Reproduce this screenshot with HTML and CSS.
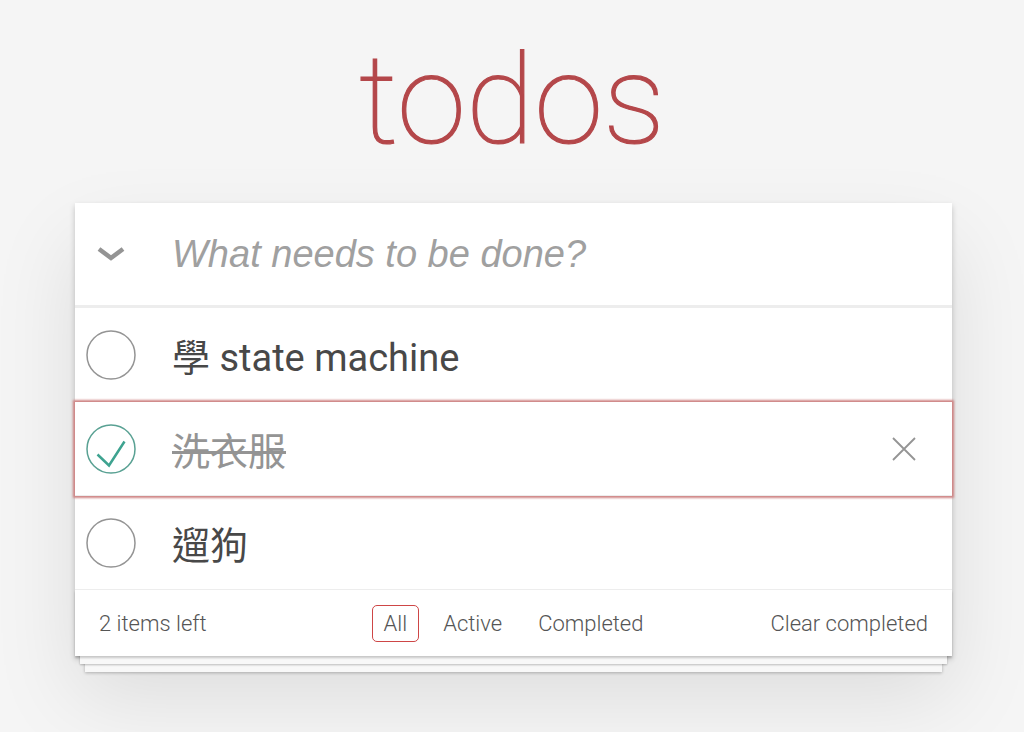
FILE: index.html
```html
<!DOCTYPE html>
<html lang="zh-Hant">
<head>
    <meta charset="UTF-8">
    <meta name="viewport" content="width=device-width, initial-scale=1.0">
    <title>todos</title>
    <link rel="stylesheet" href="styles.css">
</head>
<body>

<!-- Título -->
<h1 class="title">todos</h1>

<!-- Tarjeta principal -->
<section class="todoapp">
    <header class="header">
        <span class="toggle-all">
            <svg width="30" height="18" viewBox="0 0 30 18"><polyline points="3,4 15,13 27,4" fill="none" stroke="#949494" stroke-width="4.5"/></svg>
        </span>
        <input class="new-todo" type="text" placeholder="What needs to be done?">
    </header>

    <ul class="todo-list">
        <li class="todo">
            <span class="toggle">
                <svg width="52" height="52" viewBox="-2 -2 104 104"><circle cx="50" cy="50" r="48" fill="none" stroke="#949494" stroke-width="3"/></svg>
            </span>
            <label class="todo-text">學 state machine</label>
        </li>
        <li class="todo completed focused">
            <span class="toggle">
                <svg width="52" height="52" viewBox="-2 -2 104 104"><circle cx="50" cy="50" r="48" fill="none" stroke="#59a193" stroke-width="3"/><polyline points="23,61 46,83 77,35" fill="none" stroke="#3ea390" stroke-width="5"/></svg>
            </span>
            <label class="todo-text">洗衣服</label>
            <span class="destroy">
                <svg width="26" height="26" viewBox="0 0 26 26"><path d="M2 2L24 24M24 2L2 24" stroke="#949494" stroke-width="1.8"/></svg>
            </span>
        </li>
        <li class="todo">
            <span class="toggle">
                <svg width="52" height="52" viewBox="-2 -2 104 104"><circle cx="50" cy="50" r="48" fill="none" stroke="#949494" stroke-width="3"/></svg>
            </span>
            <label class="todo-text">遛狗</label>
        </li>
    </ul>

    <footer class="footer">
        <span class="todo-count">2 items left</span>
        <ul class="filters">
            <li><a class="selected">All</a></li>
            <li><a>Active</a></li>
            <li><a>Completed</a></li>
        </ul>
        <span class="clear-completed">Clear completed</span>
    </footer>
</section>

</body>
</html>
```

FILE: styles.css
```css
/* Estilos generales */
html, body {
    margin: 0;
    padding: 0;
}

body {
    min-height: 100vh;
    background-color: #f5f5f5;
    font-family: Roboto, "Noto Sans CJK TC", sans-serif;
    font-weight: 300;
    color: #4d4d4d;
}

.title {
    margin: 0;
    padding-top: 38px;
    margin-bottom: 38px;
    height: 127px;
    font-size: 125px;
    line-height: 1;
    font-weight: 100;
    text-align: center;
    color: #b4474a;
    -webkit-text-stroke: 1.2px #b4474a; /* trazo un poco más grueso */
}

/* Tarjeta */
.todoapp {
    width: 877px;
    margin-left: calc(50% - 437px);
    background-color: #fff;
    box-shadow: 0 3px 6px rgba(0, 0, 0, 0.2), 0 40px 80px rgba(0, 0, 0, 0.1);
}

.header {
    display: flex;
    align-items: center;
    height: 102px;
    border-bottom: 3px solid #ededed;
}

.toggle-all {
    width: 72px;
    display: flex;
    justify-content: center;
}

.new-todo {
    flex: 1;
    border: none;
    outline: none;
    padding: 0 24px 0 25px;
    font-family: "Liberation Sans", Arial, sans-serif;
    font-size: 38px;
    font-style: italic;
    font-weight: 400;
    color: #4d4d4d;
    background: transparent;
}

.new-todo::placeholder {
    color: #a0a0a0;
}

/* Lista */
.todo-list {
    list-style: none;
    margin: 0;
    padding: 0;
}

.todo {
    display: flex;
    align-items: center;
    height: 93px;
    border-bottom: 1px solid #ededed;
    position: relative;
}

.todo.focused {
    box-shadow: 0 0 2px 2px #cf8585;
    z-index: 1;
}

.toggle {
    width: 72px;
    display: flex;
    justify-content: center;
}

.toggle svg {
    display: block;
}

.todo-text {
    flex: 1;
    padding-left: 25px;
    font-size: 38px;
    font-weight: 400;
    color: #484848;
}

.todo.completed .todo-text {
    color: #949494;
    text-decoration: line-through;
}

.destroy {
    width: 96px;
    display: flex;
    justify-content: center;
}

/* Pie con hojas apiladas */
.footer {
    display: grid;
    grid-template-columns: 1fr auto 1fr;
    align-items: center;
    height: 66px;
    padding: 0 24px;
    font-size: 22px;
    color: #555;
    box-shadow: 0 2px 2px rgba(0, 0, 0, 0.2),
                0 13px 0 -5px #f8f8f8,
                0 14px 2px -5px rgba(0, 0, 0, 0.25),
                0 26px 0 -10px #f8f8f8,
                0 27px 3px -10px rgba(0, 0, 0, 0.25);
}

.filters {
    list-style: none;
    display: flex;
    gap: 12px;
    margin: 0;
    padding: 0;
}

.filters a {
    display: block;
    padding: 5px 11px;
    border: 1.5px solid transparent;
    border-radius: 5px;
}

.filters a.selected {
    border-color: #ce4646;
}

.clear-completed {
    text-align: right;
}
```
